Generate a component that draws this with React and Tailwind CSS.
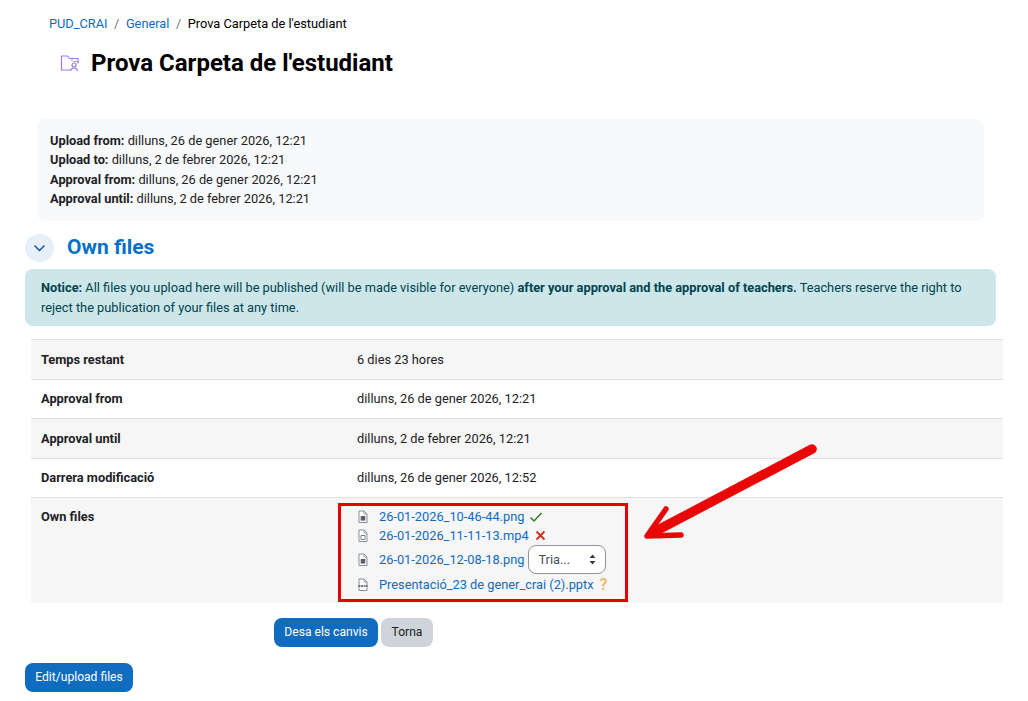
import React from 'react';

const fileLink = 'text-[#0f6cbf]';

const FileIcon = ({ kind }) => (
  <svg width="12" height="13" viewBox="0 0 12 13" fill="none" className="shrink-0">
    <path d="M2 1h5l3 3v8.500H2z" stroke="#7b828a" strokeWidth="0.9" fill="#fff" />
    <path d="M7 1v3h3" stroke="#7b828a" strokeWidth="0.7" />
    {kind === 'ppt' && <path d="M1.500 8h9" stroke="#4a5056" strokeWidth="1.600" strokeDasharray="2 0.600" />}
    {kind === 'img' && <rect x="3.700" y="6" width="4.600" height="4.600" fill="#5a6169" />}
    {kind === 'video' && <path d="M4 6.500h4v4H4z" stroke="#6a737b" strokeWidth="0.9" />}
  </svg>
);

const Row = ({ label, value, striped }) => (
  <div className={`flex items-center border-t border-[#dee2e6] ${striped ? 'bg-[#f6f6f6]' : 'bg-white'} h-[39.5px]`}>
    <div className="w-[326px] pl-[10px] font-bold">{label}</div>
    <div>{value}</div>
  </div>
);

const App = () => {
  return (
    <div className="relative w-[1028px] h-[701px] overflow-hidden bg-white text-[12.8px] text-[#1d2125] font-['Roboto',sans-serif]">
      <div className="pl-[49px] pt-[14px] h-[35px] leading-[19px] text-[12.8px] flex gap-[6.5px]">
        <span className="text-[#0f6cbf]">PUD_CRAI</span>
        <span className="text-[#6a737b]">/</span>
        <span className="text-[#0f6cbf]">General</span>
        <span className="text-[#6a737b]">/</span>
        <span className="text-black">Prova Carpeta de l'estudiant</span>
      </div>

      <div className="flex items-center pl-[60px] h-[56px]">
        <svg width="20" height="18" viewBox="0 0 20 18" fill="none" stroke="#9b7bf7" strokeWidth="1.200">
          <path d="M10 16H1.500V2h6l2 2.500h8.500v5" />
          <path d="M12 5v2M18 7.500H13" strokeWidth="0.800" />
          <circle cx="14" cy="11" r="2" />
          <path d="M10.500 17c.4-2 1.800-3 3.500-3s3.100 1 3.500 3" />
        </svg>
        <h1 className="ml-[11px] text-[24px] font-bold text-black leading-[28px]">Prova Carpeta de l'estudiant</h1>
      </div>

      <div className="ml-[37px] mt-[28px] w-[947px] h-[102px] rounded-lg bg-[#f8f9fa] px-[13px] pt-[12px] leading-[19.3px]">
        <div><b>Upload from:</b> dilluns, 26 de gener 2026, 12:21</div>
        <div><b>Upload to:</b> dilluns, 2 de febrer 2026, 12:21</div>
        <div><b>Approval from:</b> dilluns, 26 de gener 2026, 12:21</div>
        <div><b>Approval until:</b> dilluns, 2 de febrer 2026, 12:21</div>
      </div>

      <div className="flex items-center ml-[25px] mt-[13px] h-[28px]">
        <div className="w-[29px] h-[28px] rounded-full bg-[#e7eff9] flex items-center justify-center">
          <svg width="13" height="8" viewBox="0 0 13 8" fill="none" stroke="#0f47ad" strokeWidth="1.400">
            <path d="M1.500 1.500l5 5 5-5" />
          </svg>
        </div>
        <h3 className="ml-[13px] text-[21px] font-bold text-[#0570c8]">Own files</h3>
      </div>

      <div className="ml-[25px] mt-[7px] w-[971px] h-[57px] rounded-lg bg-[#cce6ea] px-[16px] pt-[9px] leading-[20px] text-[#00434e]">
        <b>Notice:</b> All files you upload here will be published (will be made visible for everyone) <b>after your approval and the approval of teachers.</b> Teachers reserve the right to reject the publication of your files at any time.
      </div>

      <div className="ml-[31px] mt-[13px] w-[972px]">
        <Row striped label="Temps restant" value="6 dies 23 hores" />
        <Row label="Approval from" value="dilluns, 26 de gener 2026, 12:21" />
        <Row striped label="Approval until" value="dilluns, 2 de febrer 2026, 12:21" />
        <Row label="Darrera modificació" value="dilluns, 26 de gener 2026, 12:52" />
        <div className="flex border-t border-[#dee2e6] bg-[#f6f6f6] h-[106px]">
          <div className="w-[326px] pl-[10px] pt-[9px] font-bold">Own files</div>
          <div className="pt-[9px]">
            <div className="flex items-center h-[19px]">
              <FileIcon kind="img" />
              <span className={`ml-[10px] ${fileLink}`}>26-01-2026_10-46-44.png</span>
              <svg width="14" height="12" viewBox="0 0 14 12" fill="none" stroke="#357a32" strokeWidth="1.500" className="ml-[5px]">
                <path d="M1.500 6.500l3.500 3.500 7.500-8" />
              </svg>
            </div>
            <div className="flex items-center h-[19px]">
              <FileIcon kind="video" />
              <span className={`ml-[10px] ${fileLink}`}>26-01-2026_11-11-13.mp4</span>
              <svg width="11" height="11" viewBox="0 0 11 11" fill="none" stroke="#ca3120" strokeWidth="1.800" className="ml-[6px]">
                <path d="M1.500 1.500l8 8M9.500 1.500l-8 8" />
              </svg>
            </div>
            <div className="flex items-center h-[29px]">
              <FileIcon kind="img" />
              <span className={`ml-[10px] ${fileLink}`}>26-01-2026_12-08-18.png</span>
              <div className="ml-[4px] w-[78px] h-[29px] rounded-lg border border-[#8f959e] bg-white pl-[9px] pr-[9px] flex items-center justify-between text-[#495057]">
                <span>Tria...</span>
                <svg width="7" height="11" viewBox="0 0 7 11" fill="#343a40">
                  <path d="M3.500 0.500L6.500 4H0.500zM3.500 10.500L0.500 7h6z" />
                </svg>
              </div>
            </div>
            <div className="flex items-center h-[19px] mt-[1px]">
              <FileIcon kind="ppt" />
              <span className={`ml-[10px] ${fileLink}`}>Presentació_23 de gener_crai (2).pptx</span>
              <span className="ml-[6px] text-[#f5b062] font-medium text-[16px] leading-none">?</span>
            </div>
          </div>
        </div>
      </div>

      <div className="flex gap-[3px] ml-[274px] mt-[15px]">
        <button className="h-[29px] w-[104px] rounded-lg bg-[#0f6cbf] text-white text-[12.100px]">Desa els canvis</button>
        <button className="h-[29px] w-[52px] rounded-lg bg-[#ced4da] text-[#1d2125] text-[12.100px]">Torna</button>
      </div>

      <button className="block ml-[25px] mt-[16px] h-[29px] w-[108px] rounded-lg bg-[#0f6cbf] text-white text-[12.100px]">Edit/upload files</button>

      {/* annotation drawn over the page */}
      <div className="absolute left-[338px] top-[503px] w-[290px] h-[99px] border-[3px] border-[#e60000]" />
      <svg className="absolute left-[630px] top-[430px]" width="200" height="120" viewBox="0 0 200 120" fill="none" stroke="#e90808" strokeLinecap="round" strokeLinejoin="round">
        <path d="M182 19L24 102" strokeWidth="9.500" />
        <path d="M36 79L17 106L51 105" strokeWidth="5.500" />
      </svg>
    </div>
  );
};

export default App;
